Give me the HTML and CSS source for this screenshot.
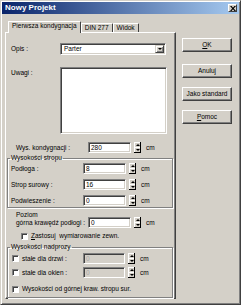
FILE: index.html
```html
<!DOCTYPE html>
<html lang="pl">
<head>
    <meta charset="UTF-8">
    <meta name="viewport" content="width=device-width, initial-scale=1.0">
    <title>Nowy Projekt</title>
    <link rel="stylesheet" href="styles.css">
</head>
<body>
    <div class="window">
        <div class="titlebar">
            <span class="title">Nowy Projekt</span>
            <span class="close">
                <svg width="6" height="5" viewBox="0 0 6 5"><path d="M0 0h1.6L3 1.8 4.4 0H6L3.8 2.5 6 5H4.4L3 3.2 1.6 5H0l2.2-2.5z" fill="#000"/></svg>
            </span>
        </div>

        <div class="content">
            <div class="tabs-area">
                <div class="tabs">
                    <div class="tab active">Pierwsza kondygnacja</div>
                    <div class="tab">DIN 277</div>
                    <div class="tab">Widok</div>
                </div>

                <div class="panel">
                    <div class="row opis-row">
                        <span class="label opis-label">Opis :</span>
                        <div class="combo">
                            <span class="combo-text">Parter</span>
                            <span class="combo-btn"><i class="arrow-down"></i></span>
                        </div>
                    </div>

                    <div class="row uwagi-row">
                        <span class="label opis-label">Uwagi :</span>
                        <div class="memo"></div>
                    </div>

                    <div class="row field-row wys-row">
                        <span class="label">Wys. kondygnacji :</span>
                        <span class="field">280</span>
                        <span class="spin"><i class="spin-btn"><i class="arrow-up"></i></i><i class="spin-btn"><i class="arrow-down"></i></i></span>
                        <span class="unit">cm</span>
                    </div>

                    <fieldset class="group stropu">
                        <legend>Wysokości stropu</legend>
                        <div class="row field-row">
                            <span class="label">Podłoga :</span>
                            <span class="field">8</span>
                            <span class="spin"><i class="spin-btn"><i class="arrow-up"></i></i><i class="spin-btn"><i class="arrow-down"></i></i></span>
                            <span class="unit">cm</span>
                        </div>
                        <div class="row field-row">
                            <span class="label">Strop surowy :</span>
                            <span class="field">16</span>
                            <span class="spin"><i class="spin-btn"><i class="arrow-up"></i></i><i class="spin-btn"><i class="arrow-down"></i></i></span>
                            <span class="unit">cm</span>
                        </div>
                        <div class="row field-row">
                            <span class="label">Podwieszenie :</span>
                            <span class="field">0</span>
                            <span class="spin"><i class="spin-btn"><i class="arrow-up"></i></i><i class="spin-btn"><i class="arrow-down"></i></i></span>
                            <span class="unit">cm</span>
                        </div>
                    </fieldset>

                    <div class="row field-row poziom-row">
                        <span class="label two-line">Poziom<br>górna krawędź podłogi :</span>
                        <span class="field">0</span>
                        <span class="spin"><i class="spin-btn"><i class="arrow-up"></i></i><i class="spin-btn"><i class="arrow-down"></i></i></span>
                        <span class="unit">cm</span>
                    </div>

                    <div class="row check-row zastosuj">
                        <span class="check"></span>
                        <span><u>Z</u>astosuj&nbsp; wymiarowanie zewn.</span>
                    </div>

                    <fieldset class="group nadprozy">
                        <legend>Wysokości nadprozy</legend>
                        <div class="row field-row">
                            <span class="check"></span>
                            <span class="label short">stałe dla drzwi :</span>
                            <span class="field disabled">0</span>
                            <span class="spin"><i class="spin-btn"><i class="arrow-up"></i></i><i class="spin-btn"><i class="arrow-down"></i></i></span>
                            <span class="unit">cm</span>
                        </div>
                        <div class="row field-row">
                            <span class="check"></span>
                            <span class="label short">stałe dla okien :</span>
                            <span class="field disabled">0</span>
                            <span class="spin"><i class="spin-btn"><i class="arrow-up"></i></i><i class="spin-btn"><i class="arrow-down"></i></i></span>
                            <span class="unit">cm</span>
                        </div>
                        <div class="row check-row last">
                            <span class="check"></span>
                            <span>Wysokości od górnej kraw. stropu sur.</span>
                        </div>
                    </fieldset>
                </div>
            </div>

            <div class="buttons">
                <div class="btn"><u>O</u>K</div>
                <div class="btn">Anuluj</div>
                <div class="btn">Jako standard</div>
                <div class="btn"><u>P</u>omoc</div>
            </div>
        </div>
    </div>
</body>
</html>
```

FILE: styles.css
```css
html,
body {
    margin: 0;
    padding: 0;
    background: #d4d0c8;
}

body {
    font-family: "Liberation Sans", Arial, sans-serif;
    font-size: 6.5px;
    line-height: 8px;
    color: #000;
}

.window {
    width: 241px;
    height: 305px;
    box-sizing: border-box;
    background: #d4d0c8;
    border: 1px solid;
    border-color: #d4d0c8 #404040 #404040 #d4d0c8;
    box-shadow: inset 1px 1px 0 #fff, inset -1px -1px 0 #808080;
    padding: 1px;
}

.titlebar {
    height: 12px;
    display: flex;
    align-items: center;
    justify-content: space-between;
    background: linear-gradient(to right, #0a246a, #a6caf0);
    padding: 0 2px 0 3px;
}

.title {
    color: #fff;
    font-weight: bold;
    font-size: 8px;
}

.close {
    width: 9px;
    height: 8px;
    box-sizing: border-box;
    background: #d4d0c8;
    border: 1px solid;
    border-color: #fff #404040 #404040 #fff;
    display: flex;
    align-items: center;
    justify-content: center;
}

.content {
    display: flex;
    padding: 8px 0 0 3px;
}

.tabs-area {
    width: 171px;
}

/* tabs */
.tabs {
    display: flex;
    align-items: flex-end;
    height: 10px;
    padding-left: 3px;
}

.tab {
    height: 8px;
    padding: 0 3px;
    border: 1px solid;
    border-color: #fff #404040 transparent #fff;
    border-bottom: none;
    border-radius: 1px 1px 0 0;
    white-space: nowrap;
}

.tab.active {
    position: relative;
    z-index: 1;
    height: 11px;
    margin-bottom: -1px;
    padding: 0 3px;
    background: #d4d0c8;
}

.panel {
    height: 267px;
    box-sizing: border-box;
    border: 1px solid;
    border-color: #fff #404040 #404040 #fff;
    box-shadow: inset -1px -1px 0 #808080;
}

/* rows */
.row {
    display: flex;
    align-items: center;
}

.opis-row {
    margin: 10px 0 0 5px;
}

.opis-label {
    width: 49px;
}

.uwagi-row {
    margin: 12px 0 0 5px;
    align-items: flex-start;
}

.uwagi-row .label {
    padding-top: 2px;
}

.field-row .label {
    width: 72px;
}

.wys-row {
    margin: 8px 0 0 10px;
}

.combo,
.memo,
.field {
    box-sizing: border-box;
    background: #fff;
    border: 1px solid;
    border-color: #808080 #fff #fff #808080;
    box-shadow: inset 1px 1px 0 #404040, inset -1px -1px 0 #d4d0c8;
}

.combo {
    width: 106px;
    height: 12px;
    display: flex;
    align-items: center;
    justify-content: space-between;
    padding: 0 1px 0 3px;
}

.combo-btn {
    width: 9px;
    height: 8px;
    box-sizing: border-box;
    background: #d4d0c8;
    border: 1px solid;
    border-color: #d4d0c8 #404040 #404040 #d4d0c8;
    box-shadow: inset 1px 1px 0 #fff, inset -1px -1px 0 #808080;
    display: flex;
    align-items: center;
    justify-content: center;
}

.memo {
    width: 107px;
    height: 67px;
}

.field {
    width: 43px;
    height: 11px;
    padding-left: 2px;
    line-height: 9px;
}

.field.disabled {
    background: #d4d0c8;
    color: #a8a8a8;
}

.spin {
    display: flex;
    flex-direction: column;
    width: 7px;
    height: 11px;
    margin-left: 3px;
    background: #000;
    padding: 0 0 1px;
    box-sizing: border-box;
}

.spin-btn {
    flex: 1;
    display: flex;
    align-items: center;
    justify-content: center;
    background: #d4d0c8;
    border-top: 1px solid #fff;
    border-left: 1px solid #fff;
    margin-right: 1px;
}

.arrow-up,
.arrow-down {
    width: 0;
    height: 0;
    border-left: 2px solid transparent;
    border-right: 2px solid transparent;
}

.arrow-up {
    border-bottom: 2px solid #000;
}

.arrow-down {
    border-top: 2px solid #000;
}

.unit {
    margin-left: 5px;
}

/* groups */
.group {
    margin: 1px 2px 0 1px;
    padding: 0 0 1px 3px;
    border: 1px solid #808080;
    box-shadow: 1px 1px 0 #fff, inset 1px 1px 0 #fff;
}

.group legend {
    padding: 0 1px;
    margin-left: -1px;
    line-height: 8px;
}

.group .field-row {
    margin-top: 5px;
}

.group .field-row:first-of-type {
    margin-top: 1px;
}

.poziom-row {
    margin: 3px 0 0 10px;
    align-items: flex-end;
}

.poziom-row .field,
.poziom-row .spin {
    margin-bottom: -1px;
}

.check {
    width: 7px;
    height: 7px;
    box-sizing: border-box;
    background: #fff;
    border: 1px solid;
    border-color: #808080 #fff #fff #808080;
    box-shadow: inset 1px 1px 0 #404040;
    margin-right: 3px;
    flex: none;
}

.zastosuj {
    margin: 5px 0 0 15px;
}

.nadprozy {
    margin-top: 3px;
    padding-bottom: 4px;
}

.nadprozy .field-row {
    margin-top: 3px;
    margin-left: 1px;
}

.nadprozy .field-row:first-of-type {
    margin-top: 2px;
}

.nadprozy .label.short {
    width: 61px;
}

.nadprozy .field {
    width: 42px;
}

.nadprozy .last {
    margin: 7px 0 0 1px;
}

/* buttons */
.buttons {
    display: flex;
    flex-direction: column;
    margin: 16px 0 0 6px;
}

.btn {
    width: 50px;
    height: 14px;
    box-sizing: border-box;
    border: 1px solid;
    border-color: #fff #404040 #404040 #fff;
    box-shadow: inset -1px -1px 0 #808080;
    display: flex;
    align-items: center;
    justify-content: center;
    margin-top: 9px;
}

.btn:first-child {
    margin-top: 0;
    margin-bottom: 3px;
}
```
